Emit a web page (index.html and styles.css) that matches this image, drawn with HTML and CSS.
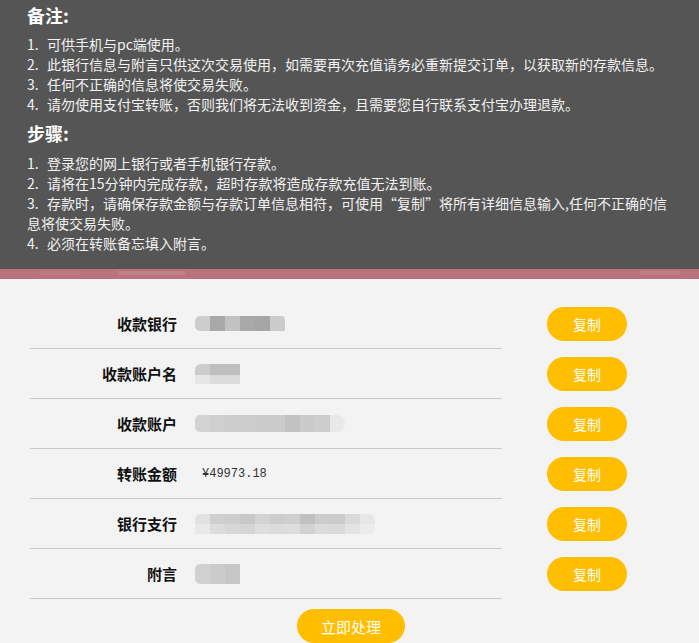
FILE: index.html
```html
<!DOCTYPE html>
<html lang="zh-CN">
<head>
<meta charset="utf-8">
<title>存款信息</title>
<link rel="stylesheet" href="styles.css">
</head>
<body>
<section class="notice">
  <h2 class="notice-title">备注:</h2>
  <div class="notice-list">
    <p class="item"><span class="num">1.</span>可供手机与pc端使用。</p>
    <p class="item"><span class="num">2.</span>此银行信息与附言只供这次交易使用，如需要再次充值请务必重新提交订单，以获取新的存款信息。</p>
    <p class="item"><span class="num">3.</span>任何不正确的信息将使交易失败。</p>
    <p class="item"><span class="num">4.</span>请勿使用支付宝转账，否则我们将无法收到资金，且需要您自行联系支付宝办理退款。</p>
  </div>
  <h2 class="notice-title second">步骤:</h2>
  <div class="notice-list steps">
    <p class="item"><span class="num">1.</span>登录您的网上银行或者手机银行存款。</p>
    <p class="item"><span class="num">2.</span>请将在15分钟内完成存款，超时存款将造成存款充值无法到账。</p>
    <p class="item"><span class="num">3.</span>存款时，请确保存款金额与存款订单信息相符，可使用“复制”将所有详细信息输入,任何不正确的信息将使交易失败。</p>
    <p class="item"><span class="num">4.</span>必须在转账备忘填入附言。</p>
  </div>
</section>
<div class="strip"></div>
<section class="rows">
  <div class="row">
    <div class="field"><span class="label">收款银行</span><span class="value"><span class="blur blur-bank"></span></span></div>
    <button class="copy">复制</button>
  </div>
  <div class="row">
    <div class="field"><span class="label">收款账户名</span><span class="value"><span class="blur blur-name"></span></span></div>
    <button class="copy">复制</button>
  </div>
  <div class="row">
    <div class="field"><span class="label">收款账户</span><span class="value"><span class="blur blur-account"></span></span></div>
    <button class="copy">复制</button>
  </div>
  <div class="row">
    <div class="field"><span class="label">转账金额</span><span class="value"><span class="amount">¥49973.18</span></span></div>
    <button class="copy">复制</button>
  </div>
  <div class="row">
    <div class="field"><span class="label">银行支行</span><span class="value"><span class="blur blur-branch"></span></span></div>
    <button class="copy">复制</button>
  </div>
  <div class="row">
    <div class="field"><span class="label">附言</span><span class="value"><span class="blur blur-memo"></span></span></div>
    <button class="copy">复制</button>
  </div>
</section>
<div class="actions">
  <button class="submit">立即处理</button>
</div>
</body>
</html>
```

FILE: styles.css
```css
* { box-sizing: border-box; }

body {
  margin: 0;
  background: #f3f3f3;
  font-family: "Noto Sans CJK SC", "Noto Sans", sans-serif;
  color: #111;
}

.notice {
  background: #555555;
  color: #f2f2f2;
  padding: 0 27px 16px;
}

.notice-title {
  margin: 0;
  height: 30px;
  font-size: 18px;
  line-height: 30px;
  font-weight: bold;
  color: #ffffff;
}

.notice-title.second { margin-top: 4px; }

.notice-list { margin-top: 4px; }
.notice-list.steps { margin-top: 5px; }

.item {
  margin: 0;
  font-size: 14px;
  line-height: 20px;
}

.num {
  display: inline-block;
  width: 20px;
  vertical-align: top;
  line-height: 20px;
}

.strip {
  height: 10px;
  background-color: #b8737b;
  background-image:
    linear-gradient(90deg,
      transparent 0 40px,
      rgba(255,255,255,0.06) 40px 80px,
      transparent 80px 118px,
      rgba(255,255,255,0.10) 118px 185px,
      transparent 185px 640px,
      rgba(255,255,255,0.08) 640px 680px,
      transparent 680px);
  background-size: 100% 4px;
  background-position: 0 2px;
  background-repeat: no-repeat;
}

.rows {
  padding: 20px 0 0 30px;
}

.row {
  display: flex;
  align-items: center;
}

.field {
  width: 472px;
  height: 50px;
  border-bottom: 1px solid #c8c8c8;
  display: flex;
  align-items: center;
}

.label {
  width: 147px;
  text-align: right;
  font-size: 15px;
  font-weight: bold;
  color: #111;
}

.value {
  margin-left: 18px;
  display: flex;
  align-items: center;
}

.amount {
  margin-left: 7px;
  font-family: "Liberation Mono", monospace;
  font-size: 12px;
  color: #333;
}

.blur {
  display: block;
  background-repeat: no-repeat;
}

.blur-bank {
  width: 90px;
  height: 15px;
  border-radius: 5px 4px 0 5px;
  background-image: linear-gradient(90deg,
    #cdcdcd 0 15px, #a9a9a9 15px 30px, #c2c2c2 30px 45px,
    #a9a9a9 45px 60px, #a6a6a6 60px 75px, #cbcbcb 75px 90px);
}

.blur-name {
  width: 45px;
  height: 20px;
  border-radius: 6px 0 0 0;
  background-image:
    linear-gradient(90deg, #cccccc 0 15px, #bfbfbf 15px 45px),
    linear-gradient(90deg, #e6e6e6 0 15px, #dcdcdc 15px 45px);
  background-size: 100% 11px, 100% 9px;
  background-position: 0 0, 0 11px;
}

.blur-account {
  width: 150px;
  height: 17px;
  border-radius: 5px 8px 8px 5px;
  background-image: linear-gradient(90deg,
    #d3d3d3 0 15px, #cfcfcf 15px 30px, #cdcdcd 30px 45px,
    #cccccc 45px 60px, #cbcbcb 60px 75px, #cbcbcb 75px 90px,
    #c2c2c2 90px 105px, #cacaca 105px 120px, #cdcdcd 120px 135px,
    #e9e9e9 135px 150px);
}

.blur-branch {
  width: 180px;
  height: 20px;
  border-radius: 6px 6px 6px 0;
  background-image:
    linear-gradient(90deg,
      #e1e1e1 0 15px, #cfcfcf 15px 30px, #cecece 30px 45px,
      #c8c8c8 45px 60px, #d3d3d3 60px 75px, #cdcdcd 75px 90px,
      #cfcfcf 90px 105px, #c0c0c0 105px 120px, #cccccc 120px 135px,
      #cbcbcb 135px 150px, #dadada 150px 165px, #e7e7e7 165px 180px),
    linear-gradient(90deg,
      #e9e9e9 0 15px, #dcdcdc 15px 30px, #d8d8d8 30px 45px,
      #d5d5d5 45px 60px, #dedede 60px 75px, #dcdcdc 75px 90px,
      #dddddd 90px 105px, #d2d2d2 105px 120px, #dbdbdb 120px 135px,
      #dadada 135px 150px, #e4e4e4 150px 165px, #ececec 165px 180px);
  background-size: 100% 10px, 100% 10px;
  background-position: 0 0, 0 10px;
}

.blur-memo {
  width: 45px;
  height: 20px;
  border-radius: 5px 0 0 5px;
  background-image: linear-gradient(90deg,
    #d1d1d1 0 15px, #cbcbcb 15px 30px, #c6c6c6 30px 45px);
}

.copy {
  margin-left: 45px;
  width: 80px;
  height: 34px;
  border: 0;
  border-radius: 17px;
  background: #ffbe00;
  color: #ffffff;
  font-family: "Noto Sans CJK SC", sans-serif;
  font-size: 14px;
  padding: 0;
  margin-top: -1px;
}

.actions {
  display: flex;
  justify-content: center;
  padding: 10px 0 0 3px;
}

.submit {
  width: 108px;
  height: 34px;
  border: 0;
  border-radius: 17px;
  background: #ffbe00;
  color: #ffffff;
  font-family: "Noto Sans CJK SC", sans-serif;
  font-size: 15px;
  padding: 0;
}
```
